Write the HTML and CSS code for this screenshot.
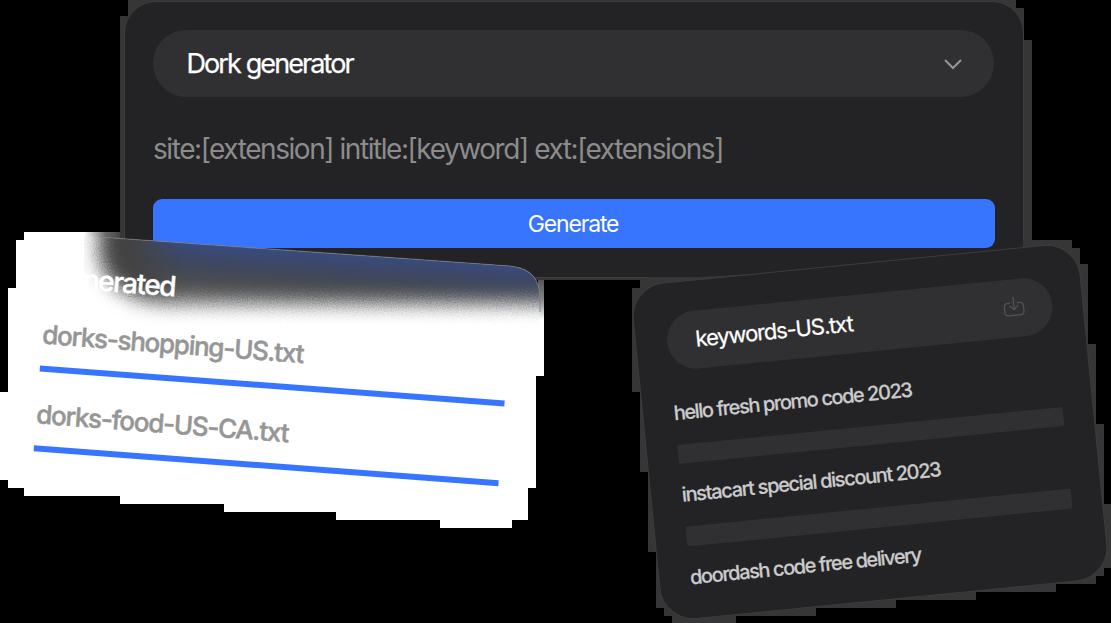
FILE: index.html
```html
<!DOCTYPE html>
<html lang="en">
<head>
<meta charset="utf-8">
<title>Dork generator</title>
<link rel="stylesheet" href="styles.css">
</head>
<body>
<main class="scene">
  <svg class="layer" viewBox="0 0 1111 623" aria-hidden="true">
    <path class="halo" d="M128 0H1016V8H1024V40H1032V280H120V16H128Z"/>
  </svg>

  <section class="card generator">
    <div class="select"><span>Dork generator</span>
      <svg class="chevron" viewBox="0 0 20 12"><path d="M2 2l8 8 8-8"/></svg>
    </div>
    <p class="pattern">site:[extension] intitle:[keyword] ext:[extensions]</p>
    <button class="generate">Generate</button>
  </section>

  <svg class="layer" viewBox="0 0 1111 623" aria-hidden="true">
    <defs>
      <linearGradient id="shade" gradientUnits="userSpaceOnUse" x1="300" y1="248" x2="296" y2="312">
        <stop offset="0" stop-color="#384c88"/>
        <stop offset=".3" stop-color="#3c4762"/>
        <stop offset=".5" stop-color="#44474d"/>
        <stop offset=".75" stop-color="#545454"/>
        <stop offset="1" stop-color="#707070"/>
      </linearGradient>
      <linearGradient id="side" gradientUnits="userSpaceOnUse" x1="100" y1="0" x2="185" y2="0">
        <stop offset="0" stop-color="#434344"/>
        <stop offset=".4" stop-color="#434344"/>
        <stop offset="1" stop-color="#434344" stop-opacity="0"/>
      </linearGradient>
      <linearGradient id="edge" gradientUnits="userSpaceOnUse" x1="84" y1="0" x2="120" y2="0">
        <stop offset="0" stop-color="#fff"/>
        <stop offset=".6" stop-color="#6a6a6a"/>
        <stop offset="1" stop-color="#444"/>
      </linearGradient>
      <linearGradient id="edgeRight" gradientUnits="userSpaceOnUse" x1="0" y1="280" x2="0" y2="320">
        <stop offset="0" stop-color="#555"/>
        <stop offset=".5" stop-color="#888"/>
        <stop offset="1" stop-color="#fff"/>
      </linearGradient>
      <filter id="grain" filterUnits="userSpaceOnUse" x="40" y="180" width="620" height="180" color-interpolation-filters="sRGB">
        <feGaussianBlur stdDeviation="9.500" result="b"/>
        <feTurbulence type="fractalNoise" baseFrequency=".8" numOctaves="2" result="n"/>
        <feDisplacementMap in="b" in2="n" scale="8" xChannelSelector="R" yChannelSelector="G"/>
      </filter>
      <clipPath id="cardTop"><path d="M84 236L510 266Q540 269 540 298V330H84Z"/></clipPath>
    </defs>
    <path class="sheet" d="M24 232H90V238L510 268Q535 271 539 312H544V376H536V488H528V520H512V528H440V520H336V512H224V504H120V496H24V488H8V480H0V392H8V288H16V240H24Z"/>
    <path d="M84 232H120V239L84 237Z" fill="url(#edge)"/>
    <path d="M538 280H544V320H538Z" fill="url(#edgeRight)"/>
    <g clip-path="url(#cardTop)">
      <path fill="#fff" d="M84 230H544V330H84Z"/>
      <g filter="url(#grain)">
        <path fill="url(#shade)" d="M99 190H620V304H170Q106 299 99 255Z"/>
        <path fill="url(#side)" d="M99 190H190V304H170Q106 299 99 255Z"/>
      </g>
    </g>
    <path class="rim" d="M100 237L510 266Q540 269 540 298V312"/>
  </svg>

  <section class="generated">
    <h2>Generated</h2>
    <p class="file first">dorks-shopping-US.txt</p>
    <p class="file second">dorks-food-US-CA.txt</p>
  </section>

  <svg class="layer" viewBox="0 0 1111 623" aria-hidden="true">
    <path class="halo" d="M640 280H648V277H700L1000 260H1023V240H1072V248H1080V264H1088V344H1096V424H1104V504H1111V568H1104V576H1096V584H1056V592H976V600H896V608H816V616H736V623H672V616H664V608H656V552H648V472H640V392H632V288H640Z"/>
  </svg>

  <section class="card keywords">
    <div class="select small"><span>keywords-US.txt</span>
      <svg class="download" viewBox="0 0 24 24"><path d="M8 8H6Q2 8 2 12V17Q2 21 6 21H18Q22 21 22 17V12Q22 8 18 8H16M12 2V15M8 11l4 4 4-4"/></svg>
    </div>
    <p class="k1">hello fresh promo code 2023</p>
    <div class="bar"></div>
    <p class="k2">instacart special discount 2023</p>
    <div class="bar"></div>
    <p class="k3">doordash code free delivery</p>
  </section>
</main>
</body>
</html>
```
FILE: styles.css
```css
* { box-sizing: border-box; }
body { margin: 0; background: #000; font-family: Inter, "Liberation Sans", sans-serif; }
p, h2 { margin: 0; white-space: nowrap; }
.scene { position: relative; width: 1111px; height: 623px; overflow: hidden; background: #000; }
.layer { position: absolute; left: 0; top: 0; width: 1111px; height: 623px; }
.halo { fill: #363636; }
.sheet { fill: #fff; }
.rim { fill: none; stroke: #777b84; stroke-opacity: .65; stroke-width: 1.2; }
.card { position: absolute; background: #232325; border: 1.5px solid #3c3c3e; display: flex; flex-direction: column; }
.generator { left: 124px; top: 1px; width: 900px; height: 277px; border-radius: 32px; padding: 28px 28px; }
.select { display: flex; align-items: center; justify-content: space-between; background: #303032; color: #fff; height: 67px; border-radius: 34px; padding: 0 31px 0 33.500px; font-size: 27px; letter-spacing: -1.9px; -webkit-text-stroke: .25px; flex: none; }
.chevron { width: 20px; height: 12px; fill: none; stroke: #969698; stroke-width: 2; }
.generator .select { width: 841px; }
.pattern { margin-top: 34px; height: 36px; line-height: 36px; font-size: 28px; letter-spacing: -1.440px; color: #8c8c8d; }
.generate { margin-top: 32px; height: 49px; border: 0; border-radius: 9px; background: #3775ff; color: #fff; font: 23px Inter, sans-serif; letter-spacing: -1.150px; flex: none; padding: 0 2px 0 0; }

.generated { position: absolute; left: 52px; top: 233px; width: 490px; height: 262px; transform: rotate(4.3deg); transform-origin: 0 0; }
.generated h2 { padding-top: 25.500px; height: 68px; line-height: 36px; font-size: 28px; font-weight: 500; letter-spacing: -1.500px; color: #fff; -webkit-text-stroke: .4px; }
.file { width: 466px; height: 55px; line-height: 36px; border-bottom: 6.5px solid #3775ff; font-size: 26px; font-weight: 500; letter-spacing: -1.220px; color: #969696; -webkit-text-stroke: .5px; padding-left: 0; }
.first { margin-top: 16px; margin-left: -2px; }
.second { margin-top: 25px; margin-left: -2px; }

.keywords { left: 644.500px; top: 262.500px; width: 450px; height: 337.600px; border-radius: 34px; padding: 29.500px 30.500px; transform: rotate(-5.65deg); color: #cbcbcc; font-size: 20px; letter-spacing: -1.380px; font-weight: 500; }
.select.small { height: 58px; border-radius: 29px; font-size: 22px; letter-spacing: -1.080px; font-weight: 400; padding: 0 27px 1px 29px; }
.download { width: 23px; height: 23px; margin-bottom: 2px; fill: none; stroke: #525254; stroke-width: 1.4; stroke-linecap: round; }
.keywords p { height: 28px; line-height: 28px; flex: none; -webkit-text-stroke: .2px; }
.k1 { margin-top: 28px; }
.bar { margin-top: 18px; height: 19.500px; flex: none; border-radius: 2px; background: #303032; }
.k2, .k3 { margin-top: 17px; }
.keywords .k2 { letter-spacing: -1.320px; }
.keywords .k3 { line-height: 29px; }
```
